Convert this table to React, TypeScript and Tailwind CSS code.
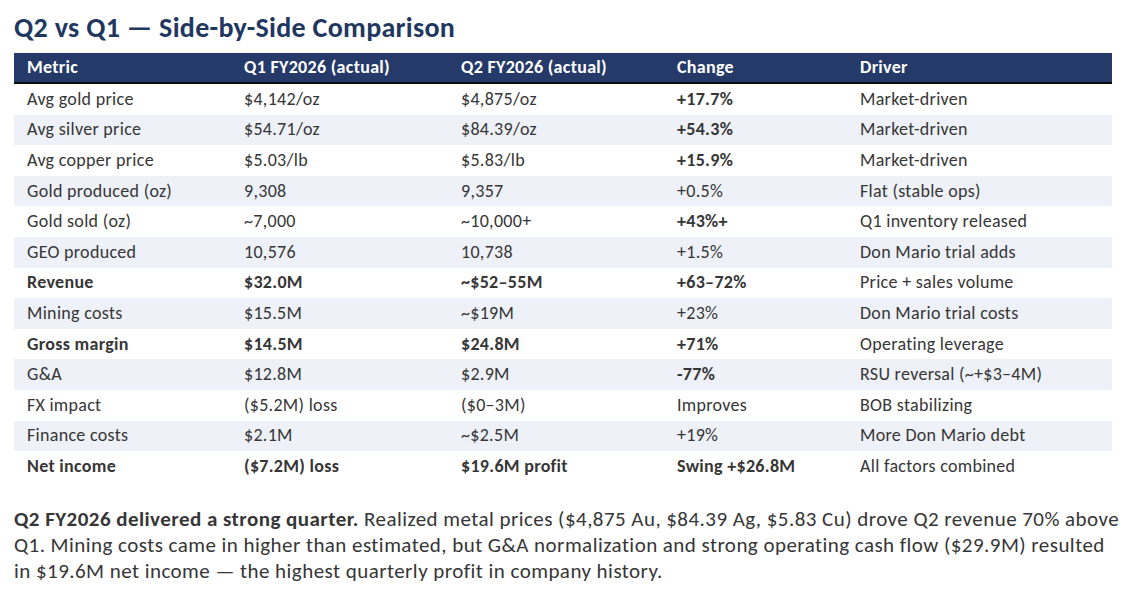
import React from "react";

type Row = { m: string; q1: string; q2: string; c: string; d: string; bold?: boolean; cb?: boolean };

const rows: Row[] = [
  { m: "Avg gold price", q1: "$4,142/oz", q2: "$4,875/oz", c: "+17.7%", d: "Market-driven", cb: true },
  { m: "Avg silver price", q1: "$54.71/oz", q2: "$84.39/oz", c: "+54.3%", d: "Market-driven", cb: true },
  { m: "Avg copper price", q1: "$5.03/lb", q2: "$5.83/lb", c: "+15.9%", d: "Market-driven", cb: true },
  { m: "Gold produced (oz)", q1: "9,308", q2: "9,357", c: "+0.5%", d: "Flat (stable ops)" },
  { m: "Gold sold (oz)", q1: "~7,000", q2: "~10,000+", c: "+43%+", d: "Q1 inventory released", cb: true },
  { m: "GEO produced", q1: "10,576", q2: "10,738", c: "+1.5%", d: "Don Mario trial adds" },
  { m: "Revenue", q1: "$32.0M", q2: "~$52–55M", c: "+63–72%", d: "Price + sales volume", bold: true, cb: true },
  { m: "Mining costs", q1: "$15.5M", q2: "~$19M", c: "+23%", d: "Don Mario trial costs" },
  { m: "Gross margin", q1: "$14.5M", q2: "$24.8M", c: "+71%", d: "Operating leverage", bold: true, cb: true },
  { m: "G&A", q1: "$12.8M", q2: "$2.9M", c: "-77%", d: "RSU reversal (~+$3–4M)", cb: true },
  { m: "FX impact", q1: "($5.2M) loss", q2: "($0–3M)", c: "Improves", d: "BOB stabilizing" },
  { m: "Finance costs", q1: "$2.1M", q2: "~$2.5M", c: "+19%", d: "More Don Mario debt" },
  { m: "Net income", q1: "($7.2M) loss", q2: "$19.6M profit", c: "Swing +$26.8M", d: "All factors combined", bold: true, cb: true },
];

const cols = "grid grid-cols-[217px_217px_216px_183px_265px]";

export default function App() {
  return (
    <div
      className="w-[1128px] h-[601px] bg-white overflow-hidden"
      style={{ fontFamily: "Carlito, Calibri, Lato, 'Noto Sans', sans-serif" }}
    >
      <div className="pl-[14px] pt-[11px]">
        <h1 className="text-[28px] leading-[34px] font-bold text-[#21375f] tracking-[0.3px]">
          Q2 vs Q1 — Side-by-Side Comparison
        </h1>
        <div className="mt-[8px] w-[1098px]">
          <div className={`${cols} h-[31px] bg-[#263a6a] border-b-2 border-[#0d0d0d] text-white font-bold text-[18px] tracking-[0.3px] items-center`}>
            <div className="pl-[13px]">Metric</div>
            <div className="pl-[13px]">Q1 FY2026 (actual)</div>
            <div className="pl-[13px]">Q2 FY2026 (actual)</div>
            <div className="pl-[13px]">Change</div>
            <div className="pl-[13px]">Driver</div>
          </div>
          {rows.map((r, i) => (
            <div
              key={i}
              className={`${cols} h-[30.6px] items-center text-[18px] tracking-[0.3px] text-[#363636] ${i % 2 === 1 ? "bg-[#eef1f8]" : "bg-white"}`}
            >
              <div className={`pl-[13px] ${r.bold ? "font-bold" : ""}`}>{r.m}</div>
              <div className={`pl-[13px] ${r.bold ? "font-bold" : ""}`}>{r.q1}</div>
              <div className={`pl-[13px] ${r.bold ? "font-bold" : ""}`}>{r.q2}</div>
              <div className={`pl-[13px] ${r.cb ? "font-bold" : ""}`}>{r.c}</div>
              <div className="pl-[13px]">{r.d}</div>
            </div>
          ))}
        </div>
        <p className="mt-[24px] w-[1110px] text-[21px] leading-[26px] tracking-[0.45px] text-[#363636] whitespace-nowrap">
          <b className="font-bold">Q2 FY2026 delivered a strong quarter.</b> Realized metal prices ($4,875 Au, $84.39 Ag, $5.83 Cu) drove Q2 revenue 70% above
          <br />
          Q1. Mining costs came in higher than estimated, but G&amp;A normalization and strong operating cash flow ($29.9M) resulted
          <br />
          in $19.6M net income — the highest quarterly profit in company history.
        </p>
      </div>
    </div>
  );
}
